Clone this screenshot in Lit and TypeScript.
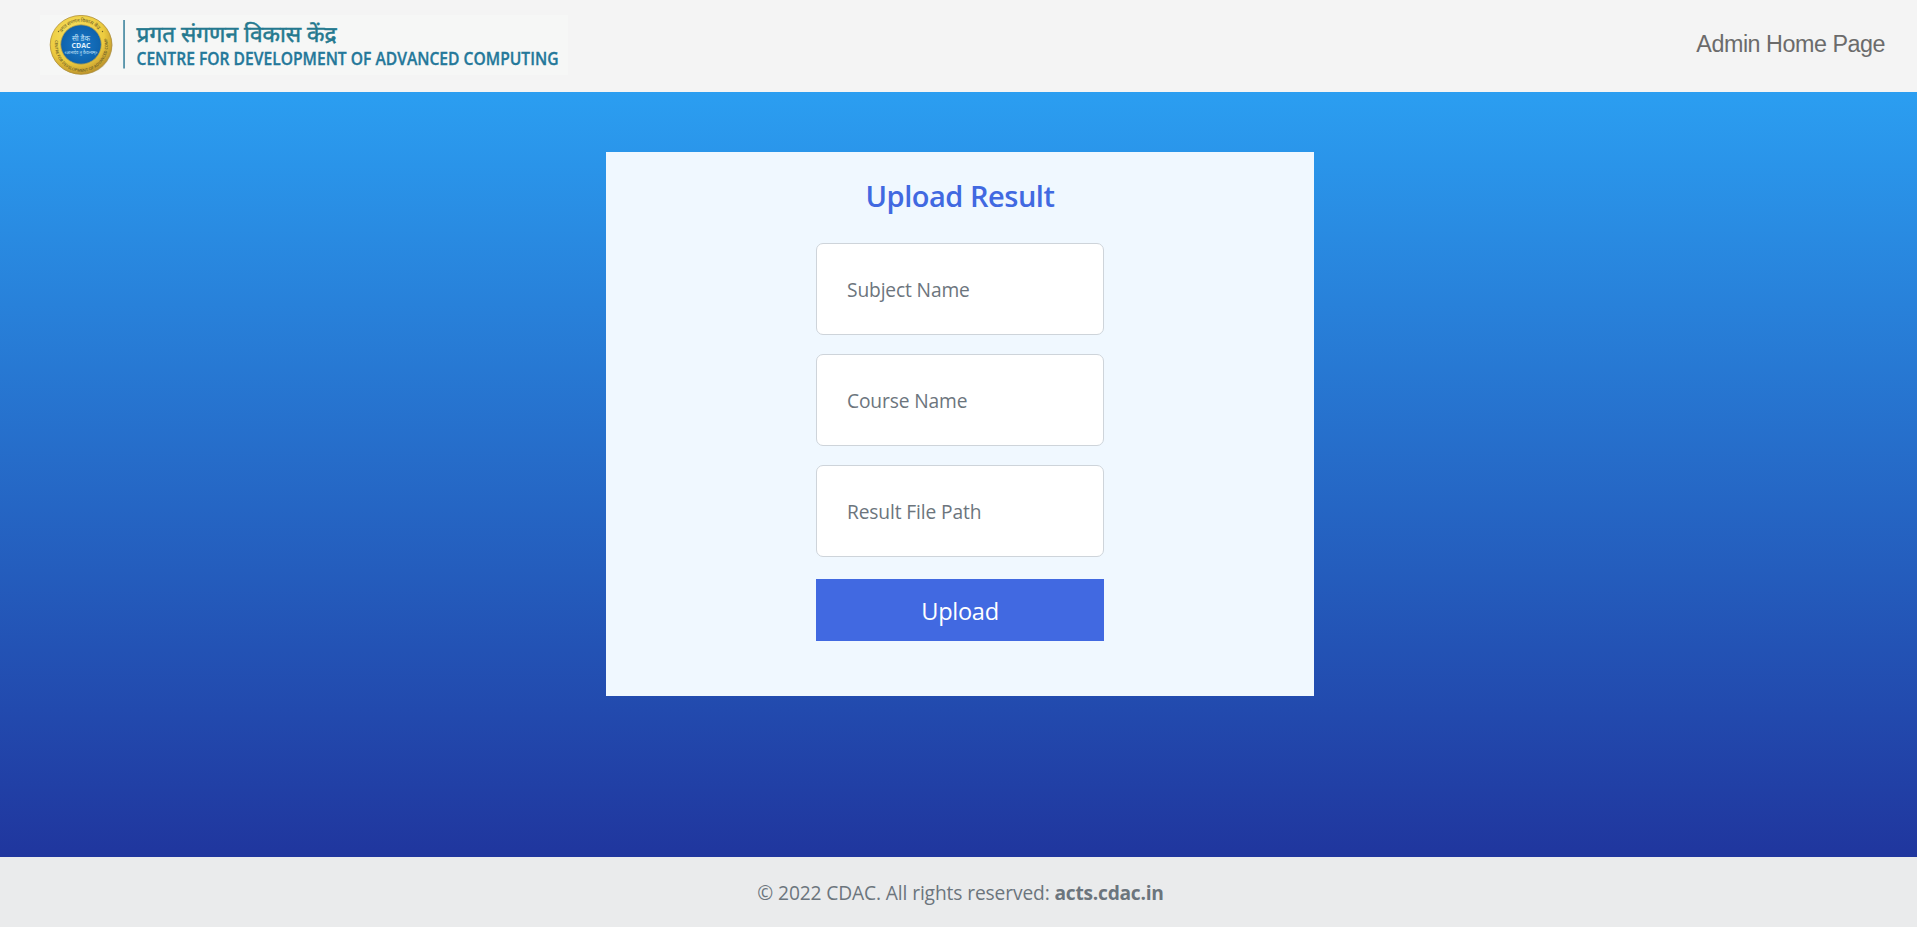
import { LitElement, html, css } from "lit";
import { customElement, property } from "lit/decorators.js";

@customElement("cdac-logo")
class CdacLogo extends LitElement {
  static styles = css`
    :host { display: block; line-height: 0; }
    .hindi { font-family: "Noto Sans Devanagari", "Noto Sans", "FreeSans", sans-serif; font-weight: 400; }
    .name { stroke: #24798f; stroke-width: 0.5px; }
    .latin { font-family: "Open Sans", sans-serif; font-weight: 600; }
    .strong { font-weight: 700; }
    .outlined { stroke: #24789a; stroke-width: 0.35px; }
  `;
  render() {
    return html`
      <svg width="528" height="60" viewBox="40 15 528 60" role="img" aria-label="CDAC">
        <defs>
          <radialGradient id="gold" cx="42%" cy="35%" r="70%">
            <stop offset="0" stop-color="#f8e468" />
            <stop offset="0.65" stop-color="#eccb3f" />
            <stop offset="1" stop-color="#b58a28" />
          </radialGradient>
          <radialGradient id="blue" cx="50%" cy="50%" r="55%">
            <stop offset="0" stop-color="#1a78c8" />
            <stop offset="1" stop-color="#0d60a9" />
          </radialGradient>
          <path id="upper" d="M58.700 39 A23.300 23.300 0 0 1 103.500 39" />
          <path id="lower" d="M55.800 38 A26.500 26.500 0 1 0 106.500 37" />
        </defs>
        <rect x="40" y="15" width="528" height="60" fill="#f6f7f6" />
        <ellipse cx="81.500" cy="45.300" rx="31" ry="29.500" fill="#a9976a" opacity="0.55" />
        <ellipse cx="81" cy="44.800" rx="30.800" ry="29.400" fill="url(#gold)" stroke="#b39032" stroke-width="0.800" />
        <ellipse cx="81" cy="44.500" rx="20.300" ry="19.700" fill="url(#blue)" stroke="#bfa545" stroke-width="0.800" />
        <text class="hindi" font-size="5" fill="#6e5f26">
          <textPath href="#upper" startOffset="7" textLength="42">प्रगत संगणन विकास केंद्र</textPath>
        </text>
        <text class="latin" font-size="4" fill="#6e5f26">
          <textPath href="#lower" startOffset="2" textLength="108">CENTRE FOR DEVELOPMENT OF ADVANCED COMPUTING</textPath>
        </text>
        <circle cx="58.500" cy="31.500" r="0.700" fill="#6e5f26" />
        <circle cx="102.500" cy="31.500" r="0.700" fill="#6e5f26" />
        <text class="hindi" x="81" y="40.500" text-anchor="middle" textLength="18" lengthAdjust="spacingAndGlyphs" font-size="8" fill="#c3e2f6">सी डैक</text>
        <text class="latin strong" x="81" y="47.600" text-anchor="middle" textLength="19" lengthAdjust="spacingAndGlyphs" font-size="6.300" fill="#e2f2fc">CDAC</text>
        <text class="hindi" x="81" y="53.500" text-anchor="middle" textLength="33" lengthAdjust="spacingAndGlyphs" font-size="4.500" fill="#c3e2f6">«ज्ञानादेव तु कैवल्यम्»</text>
        <rect x="123.200" y="20" width="1.700" height="48.500" fill="#4a8ba3" />
        <text class="hindi name" x="136.500" y="42.300" textLength="200" lengthAdjust="spacingAndGlyphs" font-size="22" fill="#24798f">प्रगत संगणन विकास केंद्र</text>
        <text class="latin outlined" x="136.500" y="64.700" textLength="422" lengthAdjust="spacingAndGlyphs" font-size="18.500" fill="#24789a">CENTRE FOR DEVELOPMENT OF ADVANCED COMPUTING</text>
      </svg>
    `;
  }
}

@customElement("text-field")
class TextField extends LitElement {
  @property() label = "";
  static styles = css`
    :host { display: block; }
    .input {
      display: block; box-sizing: border-box; width: 100%; height: 92.5px;
      padding: 0 30px; border: 1px solid #ced4da; border-radius: 7px;
      background: #fff; font: 400 19.2px "Open Sans", sans-serif; outline: none;
      letter-spacing: -0.13px;
    }
    .input::placeholder { color: #6c757d; opacity: 1; }
  `;
  render() {
    return html`<input class="input" type="text" placeholder=${this.label} />`;
  }
}

@customElement("app-root")
class AppRoot extends LitElement {
  static styles = css`
    :host {
      display: flex; flex-direction: column; height: 100vh; overflow: hidden;
      font-family: "Open Sans", sans-serif;
    }
    .header {
      display: flex; justify-content: space-between; flex: none; box-sizing: border-box;
      height: 92px; padding: 15px 32px 0 40px; background: #f4f4f4;
    }
    .home {
      margin-top: 13px; font: 400 23.3px/32px "Liberation Sans", sans-serif;
      letter-spacing: -0.46px; color: #6b6b6b; text-decoration: none;
    }
    .main {
      flex: 1; display: flex; justify-content: center; align-items: flex-start;
      padding-top: 60px; padding-left: 3px; background: linear-gradient(#2b9ef1, #20369e);
    }
    .card {
      display: flex; flex-direction: column; align-items: center;
      width: 708px; height: 544px; background: #f0f8ff;
    }
    .title {
      margin: 24px 0 26.8px; font-size: 29px; line-height: 40px; font-weight: 600;
      letter-spacing: -0.47px; color: #4169e1; white-space: nowrap;
    }
    .form { display: flex; flex-direction: column; gap: 18.6px; width: 288px; }
    .upload {
      height: 62px; margin-top: 2.5px; padding: 2px 0 0; border: 0; background: #4169e1;
      color: #fff; font: 400 23.6px "Open Sans", sans-serif; letter-spacing: -0.3px;
    }
    .footer {
      display: flex; flex: none; justify-content: center; align-items: center;
      box-sizing: border-box; height: 70px; padding: 0 0 0 4px; background: #eaebec;
      color: #6c757d; font-size: 19.2px; letter-spacing: -0.12px; white-space: pre;
    }
    .site { font-weight: 700; letter-spacing: -0.25px; color: #6c757d; text-decoration: none; }
  `;
  render() {
    return html`
      <header class="header">
        <cdac-logo></cdac-logo>
        <a class="home">Admin Home Page</a>
      </header>
      <main class="main">
        <section class="card">
          <h2 class="title">Upload Result</h2>
          <div class="form">
            ${["Subject Name", "Course Name", "Result File Path"].map(
              (l) => html`<text-field .label=${l}></text-field>`
            )}
            <button class="upload">Upload</button>
          </div>
        </section>
      </main>
      <footer class="footer"><span>© 2022 CDAC. All rights reserved: </span><a class="site">acts.cdac.in</a></footer>
    `;
  }
}
